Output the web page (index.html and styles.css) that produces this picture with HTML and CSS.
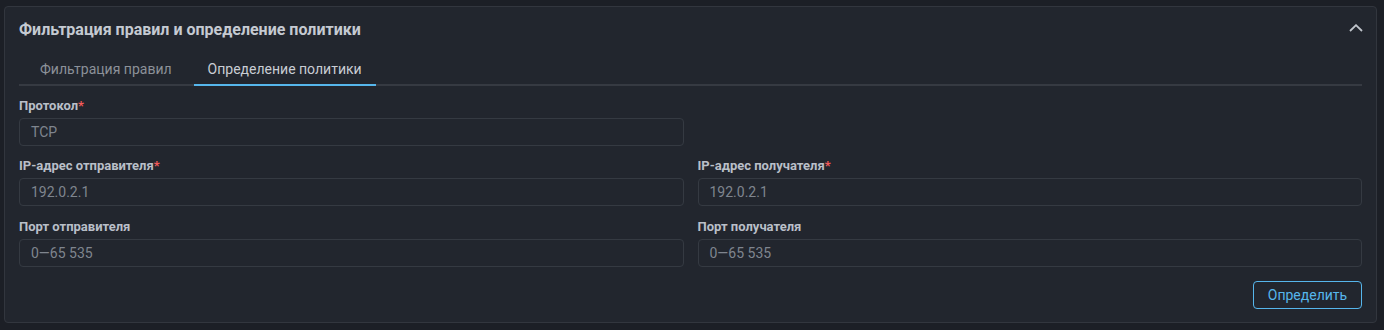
FILE: index.html
```html
<!DOCTYPE html>
<html lang="ru">
<head>
<meta charset="utf-8">
<link rel="stylesheet" href="styles.css">
</head>
<body>
<section class="card">
  <header class="card-header">
    <h2 class="card-title">Фильтрация правил и определение политики</h2>
    <button class="collapse" aria-label="Свернуть">
      <svg width="14" height="8" viewBox="0 0 14 8"><path d="M1 7 L7 1.2 L13 7" fill="none" stroke="#c0c5cc" stroke-width="1.8"/></svg>
    </button>
  </header>
  <nav class="tabs">
    <div class="tab">Фильтрация правил</div>
    <div class="tab active">Определение политики</div>
  </nav>
  <form class="form">
    <div class="field">
      <label class="label">Протокол<span class="req">*</span></label>
      <div class="input">TCP</div>
    </div>
    <div class="field empty"></div>
    <div class="field">
      <label class="label">IP-адрес отправителя<span class="req">*</span></label>
      <div class="input">192.0.2.1</div>
    </div>
    <div class="field">
      <label class="label">IP-адрес получателя<span class="req">*</span></label>
      <div class="input">192.0.2.1</div>
    </div>
    <div class="field">
      <label class="label">Порт отправителя</label>
      <div class="input">0—65 535</div>
    </div>
    <div class="field">
      <label class="label">Порт получателя</label>
      <div class="input">0—65 535</div>
    </div>
  </form>
  <div class="actions">
    <button class="btn" type="button">Определить</button>
  </div>
</section>
</body>
</html>
```
FILE: styles.css
```css
html, body {
  margin: 0;
  padding: 0;
  background: #1c1f26;
  font-family: Roboto, "Noto Sans", sans-serif;
}
body {
  padding: 6px 7px 0 4px;
  height: 330px;
  box-sizing: border-box;
}
.card {
  background: #22262e;
  border: 1px solid #32363e;
  border-radius: 4px;
  padding: 13px 14px 14px 14px;
  height: 317px;
  box-sizing: border-box;
}
.card-header {
  display: flex;
  align-items: center;
  justify-content: space-between;
  height: 20px;
}
.card-title {
  margin: 0;
  font-size: 16px;
  font-weight: 700;
  color: #c5cad2;
  line-height: 20px;
}
.collapse {
  background: none;
  border: 0;
  padding: 0;
  margin-right: -1px;
  width: 14px;
  height: 8px;
  display: flex;
  margin-top: -5px;
}
.tabs {
  display: flex;
  gap: 8px;
  padding-left: 7px;
  margin-top: 14px;
  border-bottom: 2px solid #363a42;
}
.tab {
  padding: 0 14px;
  height: 30px;
  line-height: 30px;
  font-size: 14px;
  color: #8c9199;
  margin-bottom: -2px;
  border-bottom: 2px solid transparent;
}
.tab.active {
  color: #c9cdd4;
  border-bottom-color: #56b6ec;
}
.form {
  display: grid;
  grid-template-columns: 1fr 1fr;
  column-gap: 14px;
  row-gap: 12px;
  margin-top: 12px;
}
.field {
  display: flex;
  flex-direction: column;
  gap: 4px;
}
.form .field:nth-child(n+5) {
  margin-top: 1px;
}
.label {
  font-size: 13px;
  font-weight: 700;
  color: #b9bfc8;
  line-height: 16px;
}
.req {
  color: #f25a5a;
}
.input {
  height: 28px;
  box-sizing: border-box;
  border: 1px solid #353a42;
  border-radius: 4px;
  padding: 0 11px;
  font-size: 14px;
  line-height: 26px;
  color: #7f858e;
}
.actions {
  display: flex;
  justify-content: flex-end;
  margin-top: 14px;
}
.btn {
  width: 109px;
  height: 28px;
  border: 1px solid #56b6ec;
  border-radius: 4px;
  background: transparent;
  color: #56b6ec;
  font-family: Roboto, "Noto Sans", sans-serif;
  font-size: 14px;
  padding: 0;
}
```
